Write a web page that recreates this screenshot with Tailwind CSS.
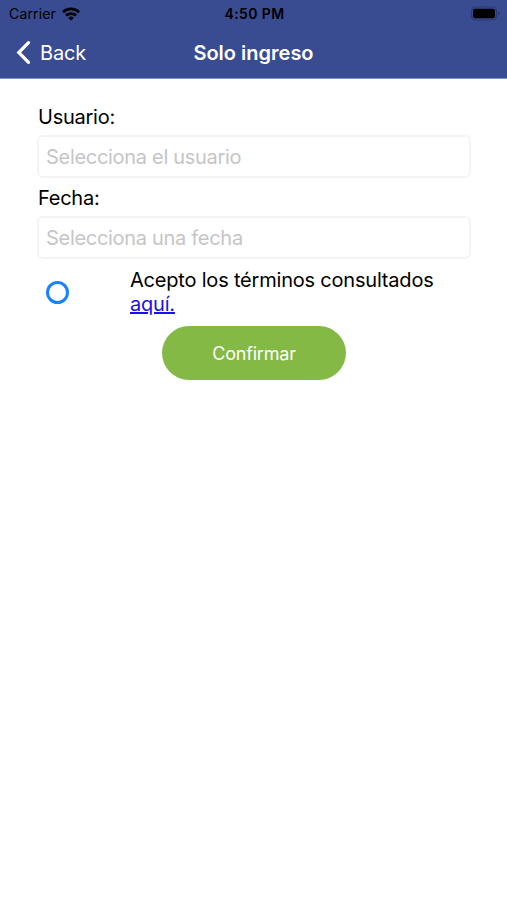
<!DOCTYPE html>
<html lang="es">

<head>
    <meta charset="utf-8">
    <meta name="viewport" content="width=device-width, initial-scale=1">
    <title>Solo ingreso</title>
    <script src="https://cdn.jsdelivr.net/npm/@tailwindcss/browser@4"></script>
</head>

<body class="min-h-screen bg-white font-['Inter',sans-serif] text-black">
    <header class="h-[79px] bg-[#394b91] border-b border-[#7f93c8]">
        <!-- Status bar -->
        <div class="grid grid-cols-3 items-center h-[27px] pl-[9px] pr-[7px] text-[14px] leading-[27px]">
            <div class="flex items-center gap-1.5">
                <span class="tracking-[0.15px]">Carrier</span>
                <svg class="w-[18px] h-[14px]" viewBox="0 0 18 14" fill="none" stroke="black" stroke-width="2.8">
                    <path d="M1 5.2a11.5 11.5 0 0 1 16 0" />
                    <path d="M4 8.6a7.2 7.2 0 0 1 10 0" />
                    <path d="M9 13.6L6.3 10.9a3.9 3.9 0 0 1 5.4 0z" fill="black" stroke="none" />
                </svg>
            </div>
            <span class="text-center font-semibold tracking-[0.4px]">4:50 PM</span>
            <svg class="w-[30px] h-[15px] justify-self-end" viewBox="0 0 30 15">
                <rect x="1.5" y="1" width="25" height="13" rx="4" fill="none" stroke="#2b3972" stroke-width="1.2" />
                <rect x="3" y="2.7" width="22" height="9.6" rx="2" fill="black" />
                <path d="M28 5.5a2.2 2.2 0 0 1 0 4z" fill="#26346b" />
            </svg>
        </div>
        <!-- Navigation bar -->
        <div class="grid grid-cols-3 items-center h-[51px] pl-4 pr-4 text-white">
            <a href="#" class="flex items-center gap-[9px] text-[20px]">
                <svg class="w-[15px] h-6" viewBox="0 0 15 24" fill="none" stroke="white" stroke-width="3.2" stroke-linecap="round" stroke-linejoin="miter">
                    <path d="M12.5 1.7L2.8 11.5l9.7 9.8" />
                </svg>
                <span class="tracking-[-0.2px]">Back</span>
            </a>
            <h1 class="text-center text-[20px] font-semibold whitespace-nowrap">Solo ingreso</h1>
        </div>
    </header>

    <form class="flex flex-col pt-6 pl-[37px] pr-9">
        <!-- Usuario -->
        <label for="usuario" class="h-8 pl-px text-[20px] leading-[28px] tracking-[-0.25px]">Usuario:</label>
        <input id="usuario" type="text" placeholder="Selecciona el usuario" class="h-[43px] px-[7px] pt-px border-2 border-[#f4f4f4] rounded-md text-[20px] tracking-[-0.3px] placeholder:text-[#c5c5c7]">
        <!-- Fecha -->
        <label for="fecha" class="h-[38px] pl-px pt-[6px] text-[20px] leading-[28px] tracking-[-0.25px]">Fecha:</label>
        <input id="fecha" type="text" placeholder="Selecciona una fecha" class="h-[43px] px-[7px] pt-px border-2 border-[#f4f4f4] rounded-md text-[20px] tracking-[-0.3px] placeholder:text-[#c5c5c7]">
        <!-- Terms -->
        <div class="flex h-[67px] pt-2 pl-[9px]">
            <span class="mt-[14px] size-[22.5px] shrink-0 rounded-full border-[3px] border-[#1683ff]"></span>
            <p class="ml-[61.5px] pt-px text-[20px] leading-6 tracking-[-0.2px] whitespace-nowrap">Acepto los términos consultados<br><a href="#" class="text-[#1a10e8] underline decoration-[1.5px]">aquí.</a></p>
        </div>
        <button type="button" class="self-center w-[184px] h-[54px] rounded-[27px] bg-[#83b944] text-white text-[18px] tracking-[-0.2px]">Confirmar</button>
    </form>
</body>

</html>
